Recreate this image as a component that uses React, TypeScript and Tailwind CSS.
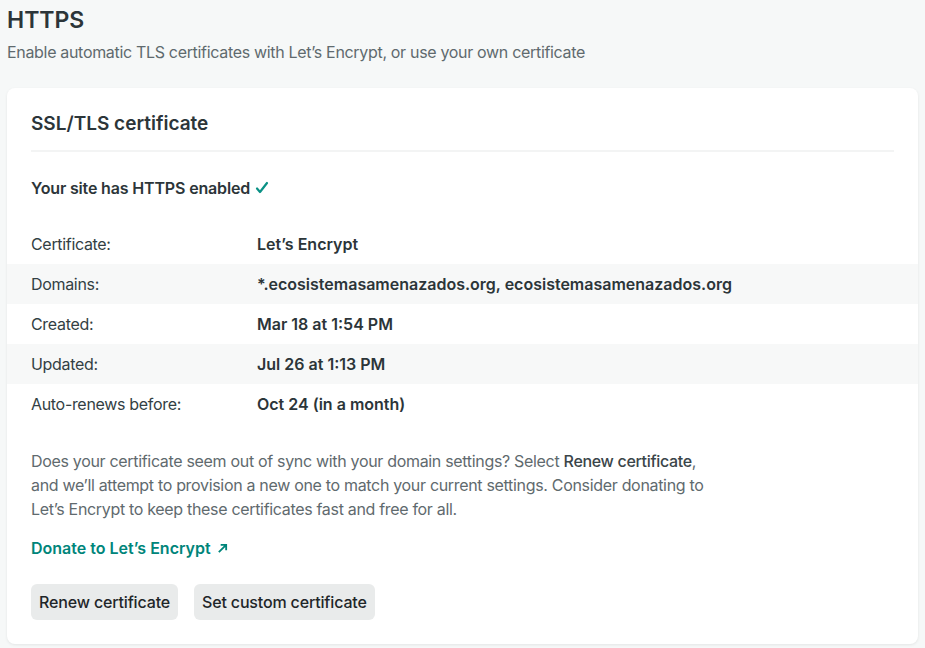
// HTTPS settings panel
const rows = [
  { label: 'Certificate:', value: 'Let’s Encrypt' },
  { label: 'Domains:', value: '*.ecosistemasamenazados.org, ecosistemasamenazados.org' },
  { label: 'Created:', value: 'Mar 18 at 1:54 PM' },
  { label: 'Updated:', value: 'Jul 26 at 1:13 PM' },
  { label: 'Auto-renews before:', value: 'Oct 24 (in a month)' },
];

function CertRow({ label, value, striped }: { label: string; value: string; striped: boolean }) {
  return (
    <div className={`flex items-center h-10 px-6 ${striped ? 'bg-[#f7f8f8]' : ''}`}>
      <div className="w-[226px] text-[#333f44]">{label}</div>
      <div className="font-semibold tracking-normal text-[#2c3539]">{value}</div>
    </div>
  );
}

export default function App() {
  return (
    <div
      className="min-h-screen bg-[#f6f8f8] px-[7px] pt-[4px] pb-[5px] text-[16px] leading-6 tracking-[-0.02em]"
      style={{ fontFamily: 'Inter, "Noto Sans", sans-serif' }}
    >
      {/* header */}
      <h1 className="text-[23px] leading-8 font-semibold tracking-normal text-[#2c3539]">HTTPS</h1>
      <p className="mt-[4px] text-[#5f6a6e]">
        Enable automatic TLS certificates with Let’s Encrypt, or use your own certificate
      </p>

      {/* card */}
      <div className="mt-6 bg-white rounded-lg shadow-[0_1px_3px_rgba(0,0,0,0.08)] pt-6 pb-6">
        <div className="px-6">
          <h2 className="text-[19px] leading-6 font-semibold tracking-normal text-[#2c3539] pb-[14px] border-b-2 border-[#f3f4f4]">
            SSL/TLS certificate
          </h2>
          <p className="mt-6 font-semibold tracking-[-0.01em] text-[#2c3539] flex items-center gap-[5px]">
            Your site has HTTPS enabled
            <svg className="w-[14px] h-[14px] text-[#0a9185]" viewBox="0 0 14 14" fill="none" stroke="currentColor" strokeWidth="2.2" strokeLinecap="round" strokeLinejoin="round">
              <path d="M2 7.5l3 3.5 7-9" />
            </svg>
          </p>
        </div>

        <div className="mt-[24px]">
          {rows.map((r, i) => (
            <CertRow key={r.label} label={r.label} value={r.value} striped={i % 2 === 1} />
          ))}
        </div>

        <div className="px-6">
          <p className="mt-[25px] max-w-[690px] text-[#5f6a6e]">
            Does your certificate seem out of sync with your domain settings? Select{' '}
            <span className="font-medium text-[#3a4549]">Renew certificate</span>, and we’ll attempt to
            provision a new one to match your current settings. Consider donating to Let’s Encrypt to keep
            these certificates fast and free for all.
          </p>
          <a href="#" className="mt-[15px] inline-flex items-center gap-[6px] font-semibold tracking-normal text-[#00857a]">
            Donate to Let’s Encrypt
            <svg className="w-[11px] h-[11px]" viewBox="0 0 12 12" fill="none" stroke="currentColor" strokeWidth="2">
              <path d="M2 10L10 2M4 2h6v6" />
            </svg>
          </a>
          <div className="mt-6 flex gap-4">
            <button className="h-9 px-2 rounded-md bg-[#e9ebeb] font-medium tracking-[-0.01em] text-[#1f2629]">Renew certificate</button>
            <button className="h-9 px-2 rounded-md bg-[#e9ebeb] font-medium tracking-[-0.01em] text-[#1f2629]">Set custom certificate</button>
          </div>
        </div>
      </div>
    </div>
  );
}
